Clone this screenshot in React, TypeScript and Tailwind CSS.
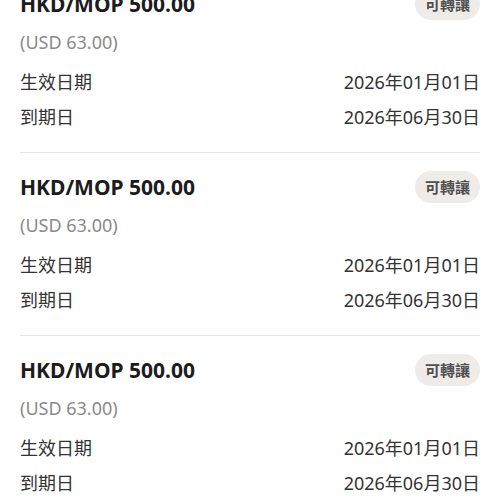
const items = [1, 2, 3];

export default function App() {
  return (
    <div
      className="bg-white min-h-screen overflow-hidden"
      style={{ fontFamily: '"Noto Sans", "Noto Sans CJK TC", sans-serif' }}
    >
      <div className="-mt-[30px] px-5">
        {items.map((i) => (
          <div key={i} className="border-b border-[#e6e6e6] pt-5 pb-[23px]">
            <div className="flex items-center justify-between h-7">
              <span className="text-[21px] leading-7 font-bold text-[#1c1c1c]">HKD/MOP 500.00</span>
              <span className="h-8 px-[10px] rounded-full bg-[#efebe8] text-[#4f4f4f] text-[15px] font-bold flex items-center">
                可轉讓
              </span>
            </div>
            <div className="mt-3 text-[18px] leading-6 text-[#8a8a8a]">(USD 63.00)</div>
            <div className="mt-4 flex flex-col gap-[11px] text-[18px] leading-6 text-[#333]">
              <div className="flex justify-between">
                <span>生效日期</span>
                <span>2026年01月01日</span>
              </div>
              <div className="flex justify-between">
                <span>到期日</span>
                <span>2026年06月30日</span>
              </div>
            </div>
          </div>
        ))}
      </div>
    </div>
  );
}
